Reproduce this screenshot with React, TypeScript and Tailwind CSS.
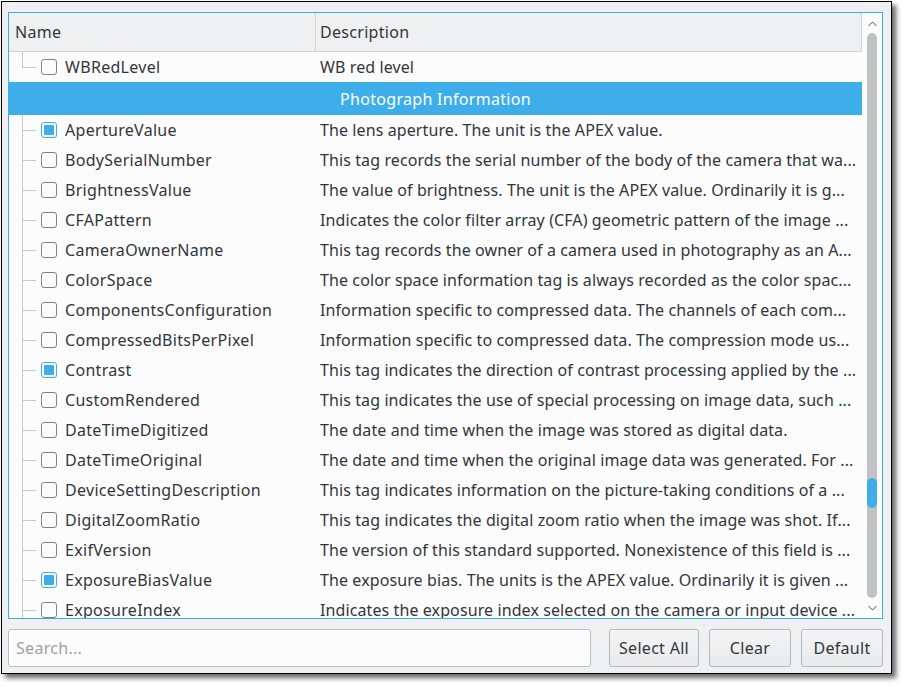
import React from "react";

type Tag = { name: string; desc: string; on?: boolean };

// descriptions as they show in the cramped column, elided like the Qt view does
const tags: Tag[] = [
  { name: "ApertureValue", desc: "The lens aperture. The unit is the APEX value.", on: true },
  { name: "BodySerialNumber", desc: "This tag records the serial number of the body of the camera that wa..." },
  { name: "BrightnessValue", desc: "The value of brightness. The unit is the APEX value. Ordinarily it is g..." },
  { name: "CFAPattern", desc: "Indicates the color filter array (CFA) geometric pattern of the image ..." },
  { name: "CameraOwnerName", desc: "This tag records the owner of a camera used in photography as an A..." },
  { name: "ColorSpace", desc: "The color space information tag is always recorded as the color spac..." },
  { name: "ComponentsConfiguration", desc: "Information specific to compressed data. The channels of each com..." },
  { name: "CompressedBitsPerPixel", desc: "Information specific to compressed data. The compression mode us..." },
  { name: "Contrast", desc: "This tag indicates the direction of contrast processing applied by the ...", on: true },
  { name: "CustomRendered", desc: "This tag indicates the use of special processing on image data, such ..." },
  { name: "DateTimeDigitized", desc: "The date and time when the image was stored as digital data." },
  { name: "DateTimeOriginal", desc: "The date and time when the original image data was generated. For ..." },
  { name: "DeviceSettingDescription", desc: "This tag indicates information on the picture-taking conditions of a ..." },
  { name: "DigitalZoomRatio", desc: "This tag indicates the digital zoom ratio when the image was shot. If..." },
  { name: "ExifVersion", desc: "The version of this standard supported. Nonexistence of this field is ..." },
  { name: "ExposureBiasValue", desc: "The exposure bias. The units is the APEX value. Ordinarily it is given ...", on: true },
  { name: "ExposureIndex", desc: "Indicates the exposure index selected on the camera or input device ..." },
];

function Check({ on }: { on?: boolean }) {
  return on ? (
    <span className="flex h-4 w-4 shrink-0 rounded-[3px] border border-[#3daee9] bg-[#fcfcfc] p-[2px]">
      <span className="flex-1 rounded-[1px] bg-[#3daee9]" />
    </span>
  ) : (
    <span className="h-4 w-4 shrink-0 rounded-[3px] border border-[#7f8285] bg-[#fcfcfc]" />
  );
}

function Row({ tag, end }: { tag: Tag; end?: boolean }) {
  return (
    <div className="flex h-[30px] shrink-0 items-center">
      <div className="flex h-full w-[307px] shrink-0 items-center">
        <div className="relative h-full w-[32px] shrink-0">
          <span className={`absolute left-[13px] top-0 w-px bg-[#c6c7c8] ${end ? "h-[15px]" : "h-full"}`} />
          <span className="absolute left-[13px] top-[15px] h-px w-[14px] bg-[#c6c7c8]" />
        </div>
        <Check on={tag.on} />
        <span className="ml-[8px] truncate">{tag.name}</span>
      </div>
      <div className="min-w-0 flex-1 truncate pl-[4px] tracking-[0.1px]">{tag.desc}</div>
    </div>
  );
}

function Chevron({ up }: { up?: boolean }) {
  return (
    <svg width="9" height="6" viewBox="0 0 9 6" className="text-[#4d5257]">
      <polyline
        points={up ? "0.5,5 4.5,1 8.5,5" : "0.5,1 4.5,5 8.5,1"}
        fill="none"
        stroke="currentColor"
        strokeWidth="1"
      />
    </svg>
  );
}

export default function App() {
  return (
    <div className="h-[686px] w-[903px] bg-white font-['Noto_Sans',sans-serif] text-[16px] tracking-[0.3px] text-[#31363b]">
      <div className="ml-px mt-px flex h-[673px] w-[891px] flex-col border border-black bg-[#eff0f1] pb-[6px] pl-[6px] pr-[8px] pt-[10px] shadow-[4px_4px_5px_rgba(0,0,0,0.6)]">
        <div className="flex h-[607px] shrink-0 border border-[#3daee9] bg-[#fcfcfc]">
          <div className="flex min-w-0 flex-1 flex-col overflow-hidden">
            <div className="flex h-[39px] shrink-0 border-b border-r border-[#d3d4d5] bg-[#eff0f1]">
              <div className="flex w-[307px] shrink-0 items-center border-r border-[#d3d4d5] pl-[6px]">Name</div>
              <div className="flex flex-1 items-center pl-[4px]">Description</div>
            </div>
            <Row tag={{ name: "WBRedLevel", desc: "WB red level" }} end />
            <div className="flex h-[33px] shrink-0 items-center justify-center bg-[#3daee9] text-white">
              Photograph Information
            </div>
            {tags.map((t) => (
              <Row key={t.name} tag={t} />
            ))}
          </div>
          <div className="flex w-[20px] shrink-0 flex-col items-center">
            <div className="flex h-[20px] shrink-0 items-center justify-center pt-px">
              <Chevron up />
            </div>
            <div className="flex w-[10px] flex-1 flex-col rounded-full bg-[#c1c2c3]">
              <div className="mt-[445px] h-[30px] rounded-full bg-[#3daee9]" />
            </div>
            <div className="flex h-[20px] shrink-0 items-center justify-center">
              <Chevron />
            </div>
          </div>
        </div>
        <div className="mt-[10px] flex h-[38px] shrink-0 gap-[10px]">
          <div className="flex min-w-0 flex-1 items-center rounded-[3px] border border-[#bdbfc1] bg-[#fcfcfc] pl-[7px] text-[#9fa2a5]">
            Search...
          </div>
          <div className="ml-[8px] flex gap-[10px]">
            <button className="w-[90px] rounded-[3px] border border-[#b7b8ba] bg-gradient-to-b from-[#f3f4f4] to-[#e9eaeb] text-[#31363b]">
              Select All
            </button>
            <button className="w-[82px] rounded-[3px] border border-[#b7b8ba] bg-gradient-to-b from-[#f3f4f4] to-[#e9eaeb] text-[#31363b]">
              Clear
            </button>
            <button className="w-[82px] rounded-[3px] border border-[#b7b8ba] bg-gradient-to-b from-[#f3f4f4] to-[#e9eaeb] text-[#31363b]">
              Default
            </button>
          </div>
        </div>
      </div>
    </div>
  );
}
